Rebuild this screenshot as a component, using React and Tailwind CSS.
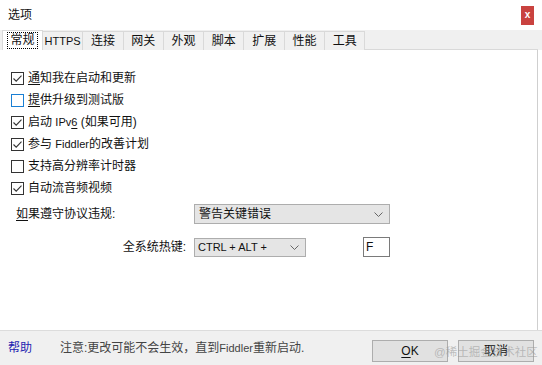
import React from 'react';

const font = { fontFamily: '"Liberation Sans", "Noto Sans CJK SC", sans-serif' };

function Check({ checked, focus }) {
  return (
    <span
      className={`w-[13px] h-[13px] bg-white border flex items-center justify-center shrink-0 ${
        focus ? 'border-[#1a7fd4]' : 'border-[#333]'
      }`}
    >
      {checked && (
        <svg width="11" height="11" viewBox="0 0 11 11">
          <path d="M1.5 5.5 L4.2 8.2 L9.5 2.6" fill="none" stroke="#333" strokeWidth="1.1" />
        </svg>
      )}
    </span>
  );
}

function Chevron() {
  return (
    <svg width="9" height="5" viewBox="0 0 9 5">
      <path d="M0.5 0.5 L4.5 4.5 L8.5 0.5" fill="none" stroke="#666" strokeWidth="1" />
    </svg>
  );
}

const tabs = ['HTTPS', '连接', '网关', '外观', '脚本', '扩展', '性能', '工具'];

const options = [
  { checked: true, label: <><u className="decoration-1 underline-offset-2">通</u>知我在启动和更新</> },
  { checked: false, focus: true, label: <><u className="decoration-1 underline-offset-2">提</u>供升级到测试版</> },
  { checked: true, label: <>启动 <span className="text-[11px]">IPv<u className="decoration-1 underline-offset-2">6</u></span> (如果可用)</> },
  { checked: true, label: <>参与 <span className="text-[11px]">Fiddler</span>的改善计划</> },
  { checked: false, label: <>支持高分辨率计时器</> },
  { checked: true, label: <>自动流音频视频</> },
];

export default function App() {
  return (
    <div className="w-[542px] h-[365px] bg-white flex flex-col text-[12px] text-[#111] relative overflow-hidden" style={font}>
      {/* title bar */}
      <div className="h-[30px] flex items-center justify-between pl-[8px] pr-[8px] shrink-0">
        <span className="leading-none">选项</span>
        <div className="w-[13px] h-[19px] bg-[#c9423f] flex items-center justify-center text-white text-[10px] font-bold leading-none">x</div>
      </div>

      {/* tab strip */}
      <div className="h-[20px] bg-[#f0f0f0] flex items-end pl-[2px] shrink-0 relative z-10 pr-[4px]">
        <div className="w-[41px] h-[20px] bg-white border border-b-0 border-[#d9d9d9] flex items-center justify-center">
          <span className="outline outline-1 outline-dotted outline-black px-[2px] leading-[15px]">常规</span>
        </div>
        {tabs.map(t => (
          <div key={t} className={`w-[40.3px] h-[19px] bg-[#f0f0f0] border-r border-t border-[#d9d9d9] flex items-center justify-center leading-none ${t === 'HTTPS' ? 'text-[11px]' : ''}`}>
            {t}
          </div>
        ))}
        <div className="flex-1 h-[1px] bg-[#d9d9d9] self-end"></div>
      </div>

      {/* panel */}
      <div className="flex-1 bg-white border-r border-[#cfcfcf] mr-[4px] pt-[17px] flex flex-col">
        <div className="flex flex-col pl-[11px]">
          {options.map((o, i) => (
            <div key={i} className="h-[22px] flex items-center gap-[4px]">
              <Check checked={o.checked} focus={o.focus} />
              <span className="leading-none">{o.label}</span>
            </div>
          ))}
        </div>

        <div className="flex items-center mt-[5px] h-[20px]">
          <span className="w-[194px] pl-[16px]"><u className="decoration-1 underline-offset-2">如</u>果遵守协议违规:</span>
          <div className="w-[196px] h-[20px] bg-[#e5e5e5] border border-[#adadad] flex items-center justify-between pl-[4px] pr-[6px]">
            <span>警告关键错误</span>
            <Chevron />
          </div>
        </div>

        <div className="flex items-center mt-[13px] h-[20px]">
          <span className="w-[194px] pr-[8px] text-right">全系统热键:</span>
          <div className="w-[112px] h-[19px] bg-[#e5e5e5] border border-[#adadad] flex items-center justify-between pl-[3px] pr-[6px]">
            <span className="text-[11px]">CTRL + ALT +</span>
            <Chevron />
          </div>
          <div className="ml-[57px] w-[27px] h-[20px] bg-white border border-[#7a7a7a] flex items-center pl-[2px]">F</div>
        </div>
      </div>

      {/* bottom bar */}
      <div className="h-[35px] bg-[#f0f0f0] border-t border-[#dcdcdc] flex items-center shrink-0 pl-[8px] pr-[8px]">
        <span className="text-[#1f1fb0] w-[52px]">帮助</span>
        <span className="text-[#444] flex-1">注意:更改可能不会生效，直到<span className="text-[11px]">Fiddler</span>重新启动.</span>
        <div className="flex gap-[10px] mt-[6px]">
          <div className="w-[76px] h-[22px] bg-[#e1e1e1] border border-[#adadad] flex items-center justify-center">
            <span><u className="decoration-1 underline-offset-2">O</u>K</span>
          </div>
          <div className="w-[76px] h-[22px] bg-[#e1e1e1] border border-[#adadad] flex items-center justify-center">
            <span>取消</span>
          </div>
        </div>
      </div>

      <span className="absolute left-[434px] top-[344px] text-[11.5px] leading-[16px] text-[#9a9a9a]/60 pointer-events-none">@稀土掘金技术社区</span>
    </div>
  );
}
